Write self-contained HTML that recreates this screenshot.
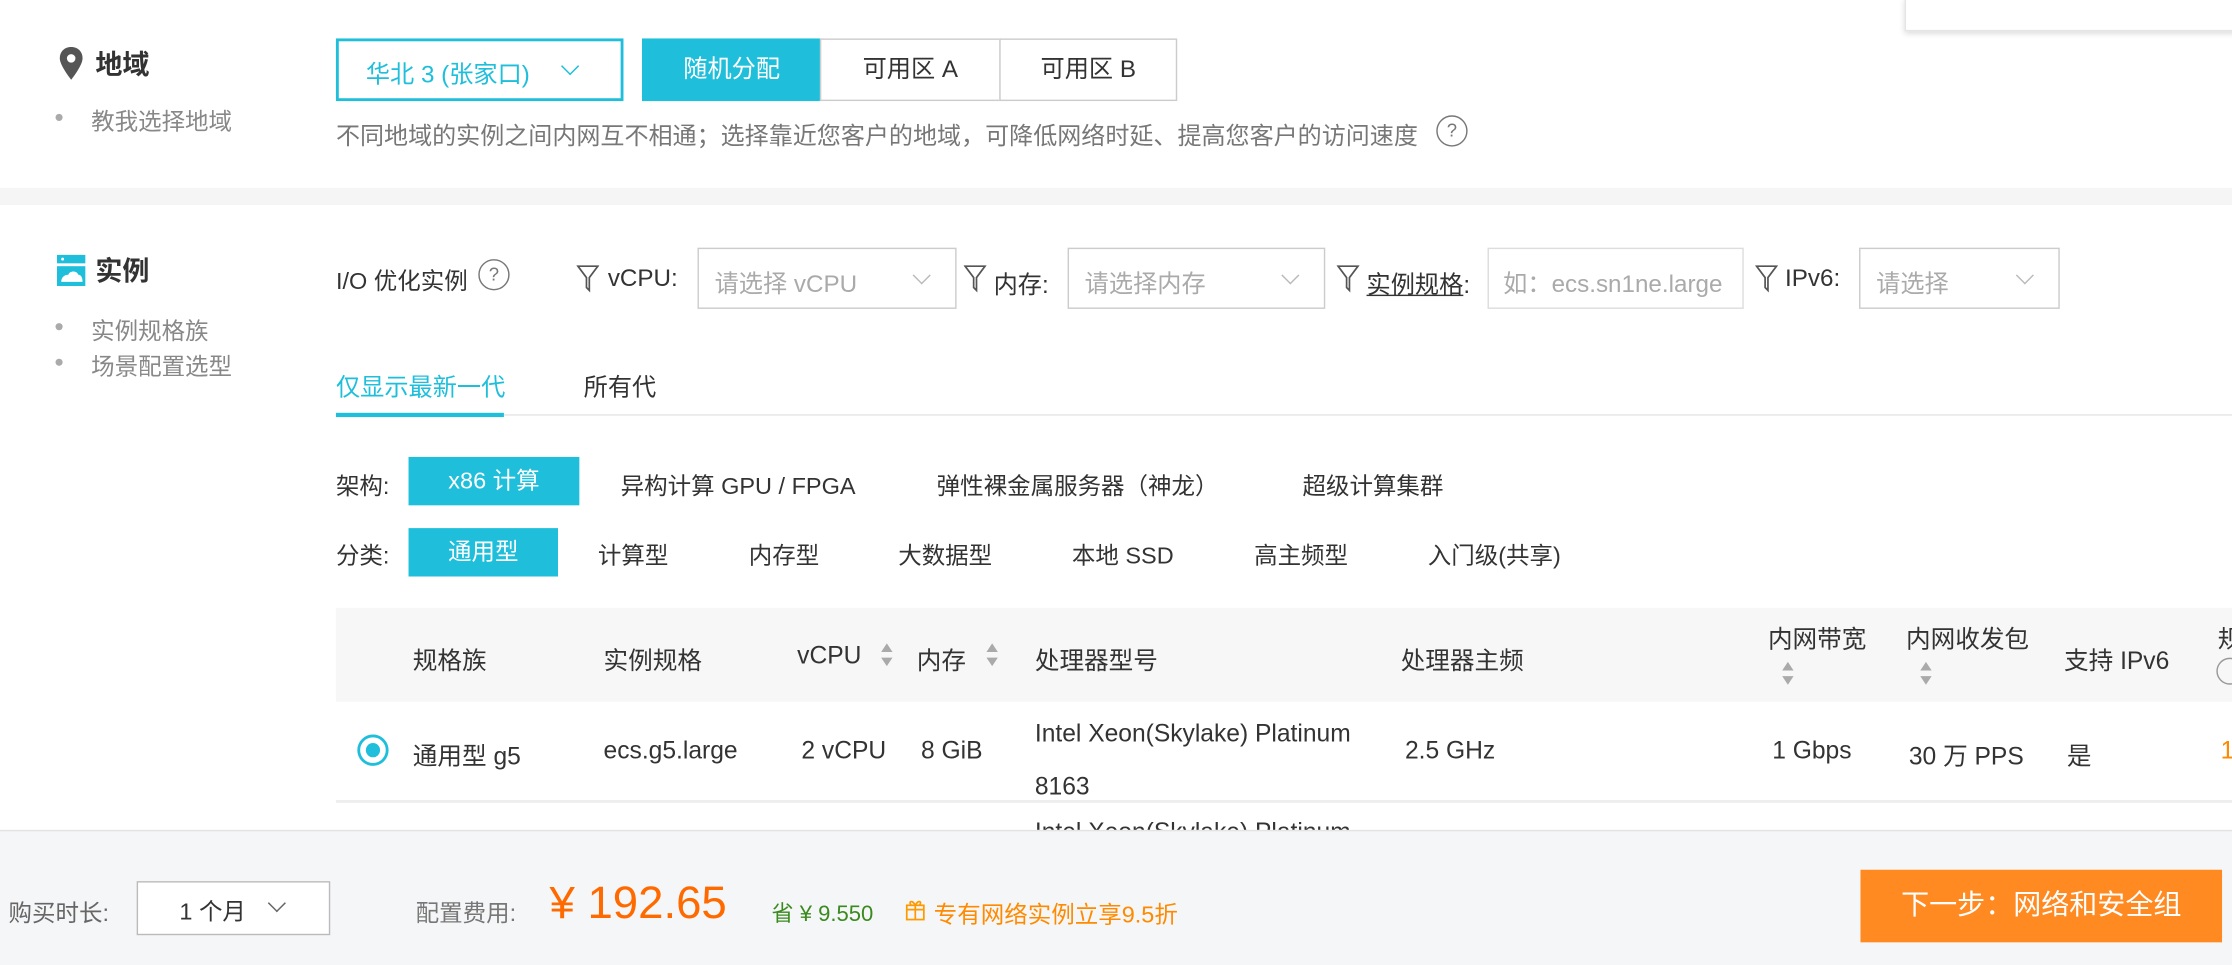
<!DOCTYPE html>
<html><head><meta charset="utf-8"><style>
html,body{margin:0;padding:0;width:2232px;height:964px;overflow:hidden;background:#f5f5f5}
#w{position:absolute;left:0;top:0;width:1568px;height:677px;transform:scale(1.42347);transform-origin:0 0;font-family:"Liberation Sans","Noto Sans CJK SC",sans-serif;color:#333;font-size:16.5px}
.a{position:absolute;white-space:nowrap}
.sec{position:absolute;left:0;background:#fff;width:1568px}
.g{color:#888;font-size:16.5px}
.dot{position:absolute;width:5px;height:5px;border-radius:50%;background:#aaa}
.box{position:absolute;border:1px solid #ccc;box-sizing:border-box;background:#fff}
.ph{color:#aaa}
.chev{position:absolute;width:8px;height:8px;border-right:1px solid #999;border-bottom:1px solid #999;transform:rotate(45deg)}
.q{position:absolute;width:19px;height:19px;border:1.5px solid #777;border-radius:50%;box-sizing:border-box;font-size:13px;text-align:center;line-height:16px;color:#777}
.btn{position:absolute;background:#1fbfdb;color:#fff;text-align:center}
.t{font-size:17.3px}
</style></head><body><div id="w">
<div class="sec" style="top:0;height:132px"></div>
<div class="sec" style="top:144px;height:440px"></div>
<div class="a" style="left:1338px;top:-2px;width:240px;height:22px;background:#fff;border:1px solid #e5e5e5;box-shadow:0 2px 4px rgba(0,0,0,.15)"></div>

<svg class="a" style="left:40px;top:32px" width="20" height="26" viewBox="0 0 20 26"><path d="M10 1C5 1 2 4.5 2 9c0 5 8 15 8 15s8-10 8-15c0-4.5-3-8-8-8z" fill="#555"/><circle cx="10" cy="9" r="3" fill="#fff"/></svg>
<div class="a" style="left:67px;top:31px;font-size:19px;font-weight:bold;color:#333">地域</div>
<div class="dot" style="left:39px;top:80px"></div>
<div class="a g" style="left:64px;top:72px">教我选择地域</div>
<div class="a" style="left:236px;top:27px;width:202px;height:44px;border:2px solid #1fbfdb;box-sizing:border-box"></div>
<div class="a" style="left:257px;top:38px;color:#1fbfdb;font-size:17px">华北 3 (张家口)</div>
<div class="chev" style="left:396px;top:42px;border-color:#1fbfdb"></div>
<div class="btn" style="left:451px;top:27px;width:126px;height:44px;line-height:44px;font-size:17px">随机分配</div>
<div class="box" style="left:576px;top:27px;width:127px;height:44px;line-height:42px;text-align:center;font-size:17px">可用区 A</div>
<div class="box" style="left:702px;top:27px;width:125px;height:44px;line-height:42px;text-align:center;font-size:17px">可用区 B</div>
<div class="a" style="left:236px;top:81px;color:#777;font-size:16.9px">不同地域的实例之间内网互不相通；选择靠近您客户的地域，可降低网络时延、提高您客户的访问速度</div>
<div class="q" style="left:1009px;top:81px;width:22px;height:22px;line-height:19px">?</div>

<svg class="a" style="left:40px;top:179px" width="20" height="22" viewBox="0 0 20 22"><rect x="0" y="0" width="20" height="6" fill="#1fbfdb"/><rect x="0" y="8" width="20" height="14" fill="#1fbfdb"/><path d="M3 19c0-3 2-5 5-5 1-3 6-3 7 0 2 0 3 2 3 5z" fill="#fff"/><circle cx="4" cy="3" r="1" fill="#fff"/></svg>
<div class="a" style="left:67px;top:176px;font-size:19px;font-weight:bold">实例</div>
<div class="dot" style="left:39px;top:227px"></div>
<div class="a g" style="left:64px;top:219px">实例规格族</div>
<div class="dot" style="left:39px;top:252px"></div>
<div class="a g" style="left:64px;top:244px">场景配置选型</div>

<div class="a" style="left:236px;top:184px">I/O 优化实例</div>
<div class="q" style="left:336px;top:182px;width:22px;height:22px;line-height:19px">?</div>
<svg class="a" style="left:405px;top:186px" width="16" height="20" viewBox="0 0 16 20"><path d="M1 1h14L9 9v9L7 16V9z" fill="none" stroke="#555" stroke-width="1.2"/></svg>
<div class="a" style="left:427px;top:186px;font-size:17px">vCPU:</div>
<div class="box" style="left:490px;top:174px;width:182px;height:43px"></div>
<div class="a ph" style="left:502px;top:185px;font-size:17px">请选择 vCPU</div>
<div class="chev" style="left:643px;top:189px;border-color:#bbb"></div>
<svg class="a" style="left:677px;top:186px" width="16" height="20" viewBox="0 0 16 20"><path d="M1 1h14L9 9v9L7 16V9z" fill="none" stroke="#555" stroke-width="1.2"/></svg>
<div class="a" style="left:698px;top:186px;font-size:17px">内存:</div>
<div class="box" style="left:750px;top:174px;width:181px;height:43px"></div>
<div class="a ph" style="left:762px;top:185px;font-size:17px">请选择内存</div>
<div class="chev" style="left:902px;top:189px;border-color:#bbb"></div>
<svg class="a" style="left:939px;top:186px" width="16" height="20" viewBox="0 0 16 20"><path d="M1 1h14L9 9v9L7 16V9z" fill="none" stroke="#555" stroke-width="1.2"/></svg>
<div class="a" style="left:960px;top:186px;font-size:17px"><span style="text-decoration:underline">实例规格</span>:</div>
<div class="box" style="left:1045px;top:174px;width:180px;height:43px;border-color:#ddd"></div>
<div class="a ph" style="left:1056px;top:185px;font-size:17px">如：ecs.sn1ne.large</div>
<svg class="a" style="left:1233px;top:186px" width="16" height="20" viewBox="0 0 16 20"><path d="M1 1h14L9 9v9L7 16V9z" fill="none" stroke="#555" stroke-width="1.2"/></svg>
<div class="a" style="left:1254px;top:186px;font-size:17px">IPv6:</div>
<div class="box" style="left:1306px;top:174px;width:141px;height:43px"></div>
<div class="a ph" style="left:1318px;top:185px;font-size:17px">请选择</div>
<div class="chev" style="left:1418px;top:189px;border-color:#bbb"></div>

<div class="a" style="left:236px;top:291px;width:1332px;height:1px;background:#e5e5e5"></div>
<div class="a" style="left:236px;top:258px;color:#1fbfdb;font-size:17px">仅显示最新一代</div>
<div class="a" style="left:236px;top:290px;width:118px;height:3px;background:#1fbfdb"></div>
<div class="a" style="left:410px;top:258px;font-size:17px">所有代</div>

<div class="a" style="left:236px;top:328px">架构:</div>
<div class="btn" style="left:287px;top:321px;width:120px;height:34px;line-height:34px">x86 计算</div>
<div class="a" style="left:436px;top:328px">异构计算 GPU / FPGA</div>
<div class="a" style="left:658px;top:328px">弹性裸金属服务器（神龙）</div>
<div class="a" style="left:915px;top:328px">超级计算集群</div>
<div class="a" style="left:236px;top:377px">分类:</div>
<div class="btn" style="left:287px;top:371px;width:105px;height:34px;line-height:34px">通用型</div>
<div class="a" style="left:420px;top:377px">计算型</div>
<div class="a" style="left:526px;top:377px">内存型</div>
<div class="a" style="left:631px;top:377px">大数据型</div>
<div class="a" style="left:753px;top:377px">本地 SSD</div>
<div class="a" style="left:881px;top:377px">高主频型</div>
<div class="a" style="left:1003px;top:377px">入门级(共享)</div>

<div class="a" style="left:236px;top:427px;width:1332px;height:66px;background:#f7f7f7"></div>
<div class="a t" style="left:290px;top:450px">规格族</div>
<div class="a t" style="left:424px;top:450px">实例规格</div>
<div class="a t" style="left:560px;top:450px">vCPU</div>
<svg class="a" style="left:618px;top:450px" width="10" height="20"><path d="M1 8L5 2L9 8z M1 12L5 18L9 12z" fill="#aaa"/></svg>
<div class="a t" style="left:644px;top:450px">内存</div>
<svg class="a" style="left:692px;top:450px" width="10" height="20"><path d="M1 8L5 2L9 8z M1 12L5 18L9 12z" fill="#aaa"/></svg>
<div class="a t" style="left:727px;top:450px">处理器型号</div>
<div class="a t" style="left:984px;top:450px">处理器主频</div>
<div class="a t" style="left:1242px;top:435px">内网带宽</div>
<svg class="a" style="left:1251px;top:463px" width="10" height="20"><path d="M1 8L5 2L9 8z M1 12L5 18L9 12z" fill="#aaa"/></svg>
<div class="a t" style="left:1339px;top:435px">内网收发包</div>
<svg class="a" style="left:1348px;top:463px" width="10" height="20"><path d="M1 8L5 2L9 8z M1 12L5 18L9 12z" fill="#aaa"/></svg>
<div class="a t" style="left:1450px;top:450px">支持 IPv6</div>
<div class="a t" style="left:1558px;top:435px">规</div>
<div class="q" style="left:1557px;top:462px;border-color:#999"></div>

<div class="a" style="left:251px;top:516px;width:22px;height:22px;border:2px solid #1fbfdb;border-radius:50%;box-sizing:border-box"></div>
<div class="a" style="left:257px;top:522px;width:10px;height:10px;background:#1fbfdb;border-radius:50%"></div>
<div class="a t" style="left:290px;top:517px">通用型 g5</div>
<div class="a t" style="left:424px;top:517px">ecs.g5.large</div>
<div class="a t" style="left:563px;top:517px">2 vCPU</div>
<div class="a t" style="left:647px;top:517px">8 GiB</div>
<div class="a t" style="left:727px;top:505px">Intel Xeon(Skylake) Platinum</div>
<div class="a t" style="left:727px;top:542px">8163</div>
<div class="a t" style="left:987px;top:517px">2.5 GHz</div>
<div class="a t" style="left:1245px;top:517px">1 Gbps</div>
<div class="a t" style="left:1341px;top:517px">30 万 PPS</div>
<div class="a t" style="left:1452px;top:517px">是</div>
<div class="a t" style="left:1560px;top:517px;color:#ff8a00">1</div>
<div class="a" style="left:236px;top:562px;width:1332px;height:2px;background:#eee"></div>
<div class="a t" style="left:727px;top:574px">Intel Xeon(Skylake) Platinum</div>

<div class="a" style="left:0;top:583px;width:1568px;height:94px;background:#f5f6f7;border-top:1px solid #e3e3e3"></div>
<div class="a" style="left:6px;top:628px;color:#666">购买时长:</div>
<div class="box" style="left:96px;top:619px;width:136px;height:38px;border-color:#bbb"></div>
<div class="a" style="left:126px;top:627px">1 个月</div>
<div class="chev" style="left:190px;top:630px;border-color:#666"></div>
<div class="a" style="left:292px;top:628px;color:#777">配置费用:</div>
<div class="a" style="left:386px;top:616px;color:#ff6a00;font-size:32px">¥ 192.65</div>
<div class="a" style="left:542px;top:630px;color:#3a8a1f;font-size:15.5px">省 ¥ 9.550</div>
<svg class="a" style="left:636px;top:631px" width="14" height="16"><rect x="1" y="5" width="12" height="10" fill="none" stroke="#f90" stroke-width="1.2"/><path d="M1 8h12M7 5v10M7 5C5 1 2 2 4 5M7 5c2-4 5-3 3 0" fill="none" stroke="#f90" stroke-width="1.2"/></svg>
<div class="a" style="left:656px;top:629px;color:#ff8a00;font-size:16.5px">专有网络实例立享9.5折</div>
<div class="a" style="left:1307px;top:611px;width:254px;height:51px;background:#ff8a21;color:#fff;font-size:19.7px;text-align:center;line-height:51px">下一步：网络和安全组</div>
</div></body></html>
